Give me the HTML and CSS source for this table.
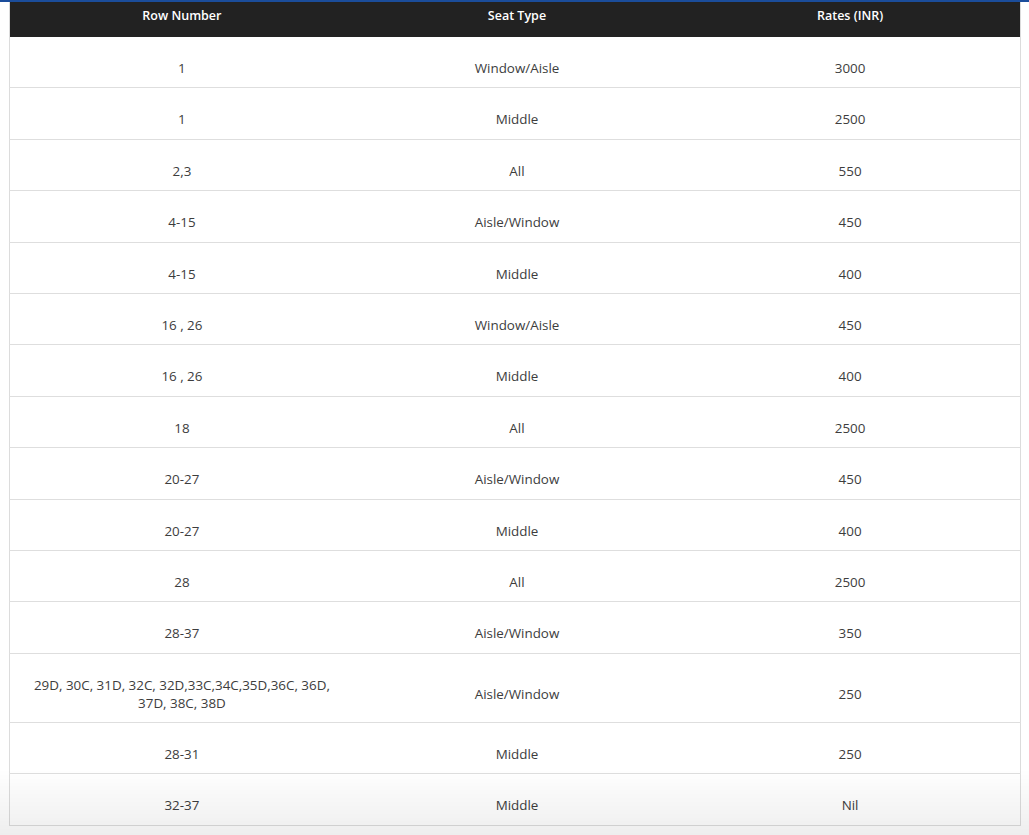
FILE: index.html
```html
<!DOCTYPE html>
<html lang="en">
<head>
<meta charset="utf-8">
<title>Seat Rates</title>
<link rel="stylesheet" href="styles.css">
</head>
<body>
<div class="topline"></div>
<div class="wrap">
<table class="rates">
  <colgroup>
    <col class="c1"><col class="c2"><col class="c3">
  </colgroup>
  <thead>
    <tr><th>Row Number</th><th>Seat Type</th><th>Rates (INR)</th></tr>
  </thead>
  <tbody>
    <tr><td>1</td><td>Window/Aisle</td><td>3000</td></tr>
    <tr><td>1</td><td>Middle</td><td>2500</td></tr>
    <tr><td>2,3</td><td>All</td><td>550</td></tr>
    <tr><td>4-15</td><td>Aisle/Window</td><td>450</td></tr>
    <tr><td>4-15</td><td>Middle</td><td>400</td></tr>
    <tr><td>16 , 26</td><td>Window/Aisle</td><td>450</td></tr>
    <tr><td>16 , 26</td><td>Middle</td><td>400</td></tr>
    <tr><td>18</td><td>All</td><td>2500</td></tr>
    <tr><td>20-27</td><td>Aisle/Window</td><td>450</td></tr>
    <tr><td>20-27</td><td>Middle</td><td>400</td></tr>
    <tr><td>28</td><td>All</td><td>2500</td></tr>
    <tr><td>28-37</td><td>Aisle/Window</td><td>350</td></tr>
    <tr><td>29D, 30C, 31D, 32C, 32D,33C,34C,35D,36C, 36D, 37D, 38C, 38D</td><td>Aisle/Window</td><td>250</td></tr>
    <tr><td>28-31</td><td>Middle</td><td>250</td></tr>
    <tr><td>32-37</td><td>Middle</td><td>Nil</td></tr>
  </tbody>
</table>
</div>
<div class="fade"></div>
</body>
</html>
```
FILE: styles.css
```css
html, body {
  margin: 0;
  padding: 0;
  background: #ffffff;
}
body {
  font-family: "Open Sans", "Liberation Sans", sans-serif;
  color: #3d3d3d;
}
.topline {
  height: 1.5px;
  background: #1b4d9b;
}
.wrap {
  padding: 0.5px 8px 40px 9px;
}
.rates {
  width: 1012px;
  border-collapse: collapse;
  border: 1px solid #dcdcdc;
  border-top: none;
  table-layout: fixed;
}
.c1 { width: 344px; }
.c2 { width: 326px; }
.c3 { width: 340px; }
.rates th {
  background: #222222;
  color: #ffffff;
  font-weight: 600;
  font-size: 12.5px;
  line-height: 18px;
  padding: 5px 10px 12px;
  text-align: center;
}
.rates td {
  font-size: 13.4px;
  line-height: 18px;
  padding: 22px 22px 10.4px;
  text-align: center;
  border-bottom: 1px solid #dedede;
}
.fade {
  position: fixed;
  left: 0;
  right: 0;
  bottom: 0;
  height: 66px;
  background: linear-gradient(to bottom, rgba(0,0,0,0) 0%, rgba(0,0,0,0.065) 100%);
  pointer-events: none;
}
```
